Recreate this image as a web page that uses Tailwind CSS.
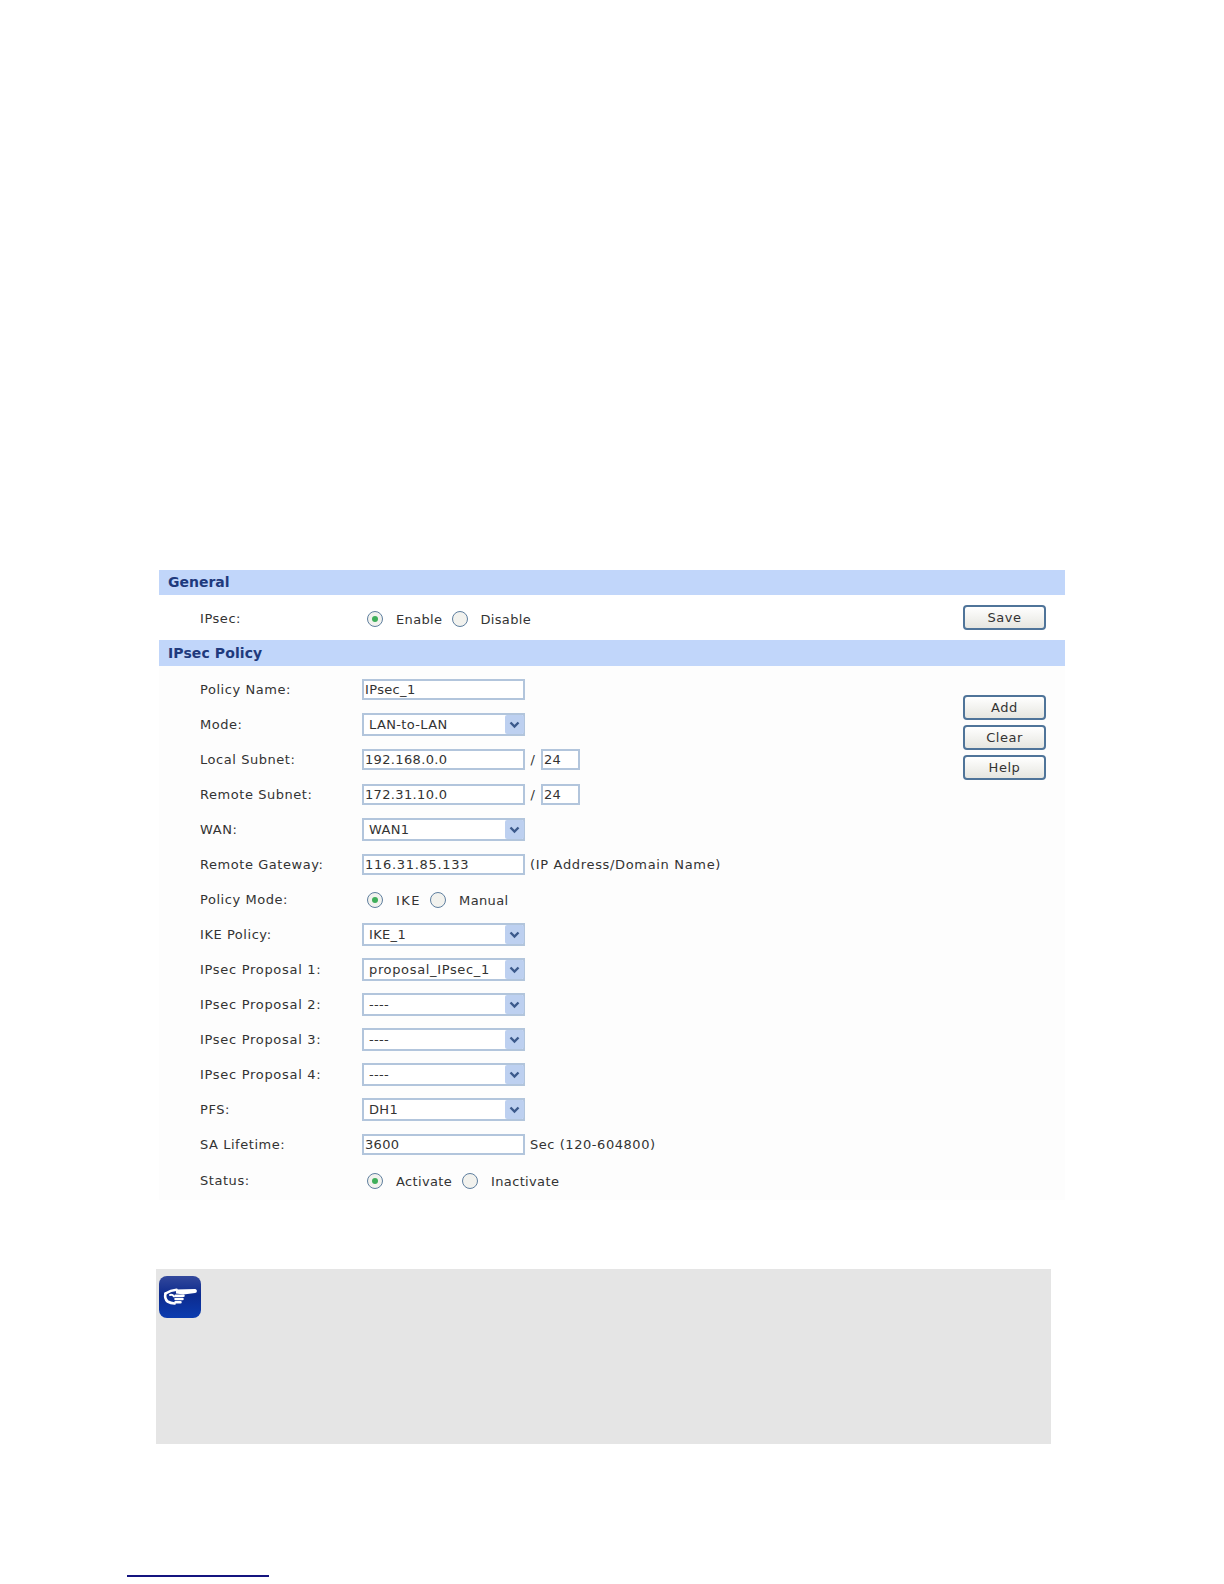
<!DOCTYPE html>
<html lang="en">
<head>
    <meta charset="UTF-8">
    <title>IPsec</title>
    <script src="https://cdn.jsdelivr.net/npm/@tailwindcss/browser@4"></script>
</head>
<body class="bg-white h-[1584px] overflow-hidden font-['DejaVu_Sans',sans-serif] text-[13px] tracking-[0.55px] text-[#333]">
<main class="pt-[570px] pl-[159px] w-[1065px]">
    <!-- General -->
    <h2 class="h-[25px] bg-[#c1d6fa] pl-[9px] flex items-center font-bold text-[14px] tracking-normal text-[#1f3a7d]">General</h2>
    <div class="h-[45px] flex items-center pl-[41px] pr-[19px] justify-between">
        <div class="flex items-center">
            <span class="w-[162px] mt-[2px]">IPsec:</span>
            <span class="flex items-center tracking-[0.35px]">
                <span class="ml-[5px] mt-[2px] w-4 h-4 rounded-full border border-[#5f7f9f] bg-[#f2f2ee] flex items-center justify-center"><span class="w-1.5 h-1.5 rounded-full bg-[#3fae5a]"></span></span>
                <span class="ml-[13px] mt-[4px]">Enable</span>
                <span class="ml-[10px] mt-[2px] w-4 h-4 rounded-full border border-[#5f7f9f] bg-[#f2f2ee]"></span>
                <span class="ml-[12px] mt-[4px]">Disable</span>
            </span>
        </div>
        <button class="w-[83px] h-[25px] rounded-[4px] border-2 border-[#4f7499] bg-gradient-to-b from-white to-[#e6e6e0]">Save</button>
    </div>

    <!-- IPsec Policy -->
    <h2 class="h-[26px] bg-[#c1d6fa] pl-[9px] flex items-center font-bold text-[14px] tracking-[0.1px] text-[#1f3a7d]">IPsec Policy</h2>
    <div class="flex justify-between bg-[#fdfdfd] pl-[41px] pr-[19px] pt-[6px] h-[534px]">
        <div class="flex flex-col">
            <div class="h-[35px] flex items-center"><span class="w-[162px]">Policy Name:</span><input value="IPsec_1" class="w-[163px] h-[21px] border-2 border-[#b2c5dc] px-[1px] tracking-[0.35px] outline-none bg-white"></div>
            <div class="h-[35px] flex items-center"><span class="w-[162px]">Mode:</span><div class="w-[163px] h-[23px] border-2 border-[#b2c5dc] bg-white pl-[5px] tracking-[0.35px] flex items-center justify-between">LAN-to-LAN<span class="w-[19px] h-[19px] mr-[-1px] rounded-[2px] bg-[#bdd0f0] flex items-center justify-center"><svg class="w-[11px] h-[8px]" viewBox="0 0 11 8" fill="none" stroke="#3c5a8c" stroke-width="2.4"><path d="M1.5 1.5l4 4 4-4"/></svg></span></div></div>
            <div class="h-[35px] flex items-center"><span class="w-[162px]">Local Subnet:</span><input value="192.168.0.0" class="w-[163px] h-[21px] border-2 border-[#b2c5dc] px-[1px] tracking-[0.35px] outline-none bg-white"><span class="w-[16px] text-center">/</span><input value="24" class="w-[39px] h-[21px] border-2 border-[#b2c5dc] px-[1px] tracking-[0.35px] outline-none bg-white"></div>
            <div class="h-[35px] flex items-center"><span class="w-[162px]">Remote Subnet:</span><input value="172.31.10.0" class="w-[163px] h-[21px] border-2 border-[#b2c5dc] px-[1px] tracking-[0.35px] outline-none bg-white"><span class="w-[16px] text-center">/</span><input value="24" class="w-[39px] h-[21px] border-2 border-[#b2c5dc] px-[1px] tracking-[0.35px] outline-none bg-white"></div>
            <div class="h-[35px] flex items-center"><span class="w-[162px]">WAN:</span><div class="w-[163px] h-[23px] border-2 border-[#b2c5dc] bg-white pl-[5px] tracking-[0.35px] flex items-center justify-between">WAN1<span class="w-[19px] h-[19px] mr-[-1px] rounded-[2px] bg-[#bdd0f0] flex items-center justify-center"><svg class="w-[11px] h-[8px]" viewBox="0 0 11 8" fill="none" stroke="#3c5a8c" stroke-width="2.4"><path d="M1.5 1.5l4 4 4-4"/></svg></span></div></div>
            <div class="h-[35px] flex items-center"><span class="w-[162px]">Remote Gateway:</span><input value="116.31.85.133" class="w-[163px] h-[21px] border-2 border-[#b2c5dc] px-[1px] tracking-[0.7px] outline-none bg-white"><span class="ml-[5px] tracking-[0.67px]">(IP Address/Domain Name)</span></div>
            <div class="h-[35px] flex items-center"><span class="w-[162px]">Policy Mode:</span><span class="flex items-center tracking-[0.35px]">
                <span class="ml-[5px] mt-[1px] w-4 h-4 rounded-full border border-[#5f7f9f] bg-[#f2f2ee] flex items-center justify-center"><span class="w-1.5 h-1.5 rounded-full bg-[#3fae5a]"></span></span>
                <span class="ml-[13px] mt-[3px] tracking-[1.5px]">IKE</span>
                <span class="ml-[9px] mt-[1px] w-4 h-4 rounded-full border border-[#5f7f9f] bg-[#f2f2ee]"></span>
                <span class="ml-[13px] mt-[3px]">Manual</span></span></div>
            <div class="h-[35px] flex items-center"><span class="w-[162px]">IKE Policy:</span><div class="w-[163px] h-[23px] border-2 border-[#b2c5dc] bg-white pl-[5px] tracking-[0.35px] flex items-center justify-between">IKE_1<span class="w-[19px] h-[19px] mr-[-1px] rounded-[2px] bg-[#bdd0f0] flex items-center justify-center"><svg class="w-[11px] h-[8px]" viewBox="0 0 11 8" fill="none" stroke="#3c5a8c" stroke-width="2.4"><path d="M1.5 1.5l4 4 4-4"/></svg></span></div></div>
            <div class="h-[35px] flex items-center"><span class="w-[162px] tracking-[0.7px]">IPsec Proposal 1:</span><div class="w-[163px] h-[23px] border-2 border-[#b2c5dc] bg-white pl-[5px] tracking-[0.65px] flex items-center justify-between">proposal_IPsec_1<span class="w-[19px] h-[19px] mr-[-1px] rounded-[2px] bg-[#bdd0f0] flex items-center justify-center"><svg class="w-[11px] h-[8px]" viewBox="0 0 11 8" fill="none" stroke="#3c5a8c" stroke-width="2.4"><path d="M1.5 1.5l4 4 4-4"/></svg></span></div></div>
            <div class="h-[35px] flex items-center"><span class="w-[162px] tracking-[0.7px]">IPsec Proposal 2:</span><div class="w-[163px] h-[23px] border-2 border-[#b2c5dc] bg-white pl-[5px] tracking-[0.35px] flex items-center justify-between">----<span class="w-[19px] h-[19px] mr-[-1px] rounded-[2px] bg-[#bdd0f0] flex items-center justify-center"><svg class="w-[11px] h-[8px]" viewBox="0 0 11 8" fill="none" stroke="#3c5a8c" stroke-width="2.4"><path d="M1.5 1.5l4 4 4-4"/></svg></span></div></div>
            <div class="h-[35px] flex items-center"><span class="w-[162px] tracking-[0.7px]">IPsec Proposal 3:</span><div class="w-[163px] h-[23px] border-2 border-[#b2c5dc] bg-white pl-[5px] tracking-[0.35px] flex items-center justify-between">----<span class="w-[19px] h-[19px] mr-[-1px] rounded-[2px] bg-[#bdd0f0] flex items-center justify-center"><svg class="w-[11px] h-[8px]" viewBox="0 0 11 8" fill="none" stroke="#3c5a8c" stroke-width="2.4"><path d="M1.5 1.5l4 4 4-4"/></svg></span></div></div>
            <div class="h-[35px] flex items-center"><span class="w-[162px] tracking-[0.7px]">IPsec Proposal 4:</span><div class="w-[163px] h-[23px] border-2 border-[#b2c5dc] bg-white pl-[5px] tracking-[0.35px] flex items-center justify-between">----<span class="w-[19px] h-[19px] mr-[-1px] rounded-[2px] bg-[#bdd0f0] flex items-center justify-center"><svg class="w-[11px] h-[8px]" viewBox="0 0 11 8" fill="none" stroke="#3c5a8c" stroke-width="2.4"><path d="M1.5 1.5l4 4 4-4"/></svg></span></div></div>
            <div class="h-[35px] flex items-center"><span class="w-[162px]">PFS:</span><div class="w-[163px] h-[23px] border-2 border-[#b2c5dc] bg-white pl-[5px] tracking-[0.35px] flex items-center justify-between">DH1<span class="w-[19px] h-[19px] mr-[-1px] rounded-[2px] bg-[#bdd0f0] flex items-center justify-center"><svg class="w-[11px] h-[8px]" viewBox="0 0 11 8" fill="none" stroke="#3c5a8c" stroke-width="2.4"><path d="M1.5 1.5l4 4 4-4"/></svg></span></div></div>
            <div class="h-[35px] flex items-center"><span class="w-[162px]">SA Lifetime:</span><input value="3600" class="w-[163px] h-[21px] border-2 border-[#b2c5dc] px-[1px] tracking-[0.35px] outline-none bg-white"><span class="ml-[5px]">Sec (120-604800)</span></div>
            <div class="h-[35px] flex items-center"><span class="w-[162px] mt-[2px]">Status:</span><span class="flex items-center tracking-[0.35px]">
                <span class="ml-[5px] mt-[2px] w-4 h-4 rounded-full border border-[#5f7f9f] bg-[#f2f2ee] flex items-center justify-center"><span class="w-1.5 h-1.5 rounded-full bg-[#3fae5a]"></span></span>
                <span class="ml-[13px] mt-[4px]">Activate</span>
                <span class="ml-[10px] mt-[2px] w-4 h-4 rounded-full border border-[#5f7f9f] bg-[#f2f2ee]"></span>
                <span class="ml-[13px] mt-[4px]">Inactivate</span></span></div>
        </div>
        <div class="flex flex-col gap-[5px] pt-[23px]">
            <button class="w-[83px] h-[25px] rounded-[4px] border-2 border-[#4f7499] bg-gradient-to-b from-white to-[#e6e6e0]">Add</button>
            <button class="w-[83px] h-[25px] rounded-[4px] border-2 border-[#4f7499] bg-gradient-to-b from-white to-[#e6e6e0]">Clear</button>
            <button class="w-[83px] h-[25px] rounded-[4px] border-2 border-[#4f7499] bg-gradient-to-b from-white to-[#e6e6e0]">Help</button>
        </div>
    </div>
</main>

<!-- Note -->
<section class="mt-[69px] ml-[156px] w-[895px] h-[175px] bg-[#e5e5e5] pt-[7px] pl-[3px]">
    <svg class="w-[42px] h-[42px]" viewBox="0 0 42 42">
        <defs><linearGradient id="noteBg" x1="0" y1="0" x2="0" y2="1"><stop offset="0" stop-color="#33489c"/><stop offset="0.45" stop-color="#0d2b8e"/><stop offset="1" stop-color="#0b3cb0"/></linearGradient></defs>
        <rect width="42" height="42" rx="8" fill="url(#noteBg)"/>
        <path d="M17 13.500l19-.5c2.500 0 2.500 4 0 4l-11.500 1.500-7.500-1z" fill="#fff"/>
        <path d="M6.500 17.500c3-2 6-3.500 11-3.800" fill="none" stroke="#fff" stroke-width="2.600" stroke-linecap="round"/>
        <path d="M6.500 17.500c-.8 3 0 6 2 8 2 1 4 1.700 7 2" fill="none" stroke="#fff" stroke-width="2.600" stroke-linecap="round"/>
        <path d="M11 19c2-.5 3 0 4 1.500" fill="none" stroke="#fff" stroke-width="2" stroke-linecap="round"/>
        <path d="M16.500 19.800h8M16.500 23h7M16.500 26.200h5" fill="none" stroke="#fff" stroke-width="2.500" stroke-linecap="round"/>
    </svg>
</section>

<!-- Footnote rule -->
<div class="mt-[131px] ml-[127px] w-[142px] h-[2px] bg-[#14147f]"></div>
</body>
</html>
